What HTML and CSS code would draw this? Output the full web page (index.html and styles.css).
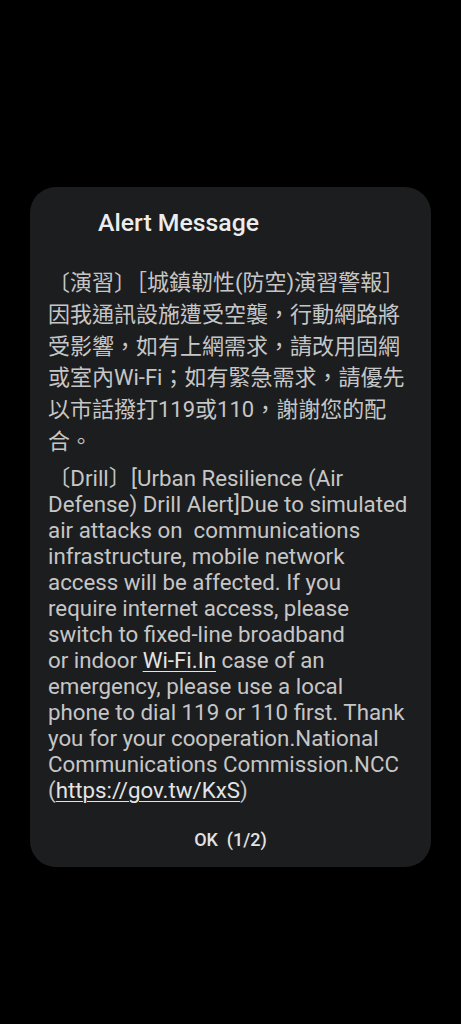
FILE: index.html
```html
<!DOCTYPE html>
<html lang="zh-Hant">
<head>
<meta charset="utf-8">
<title>Alert Message</title>
<link rel="stylesheet" href="styles.css">
</head>
<body>
<div class="screen">
  <div class="dialog">
    <div class="title">Alert Message</div>
    <div class="body">
      <p class="zh">〔演習〕［城鎮韌性(防空)演習警報］<br>因我通訊設施遭受空襲，行動網路將<br>受影響，如有上網需求，請改用固網<br>或室內Wi-Fi；如有緊急需求，請優先<br>以市話撥打119或110，謝謝您的配<br>合。</p>
      <p class="en"><span class="cjk">〔</span>Drill<span class="cjk">〕</span>[Urban Resilience (Air<br>Defense) Drill Alert]Due to simulated<br>air attacks on&nbsp; communications<br>infrastructure, mobile network<br>access will be affected. If you<br>require internet access, please<br>switch to fixed-line broadband<br>or indoor <span class="link">Wi-Fi.In</span> case of an<br>emergency, please use a local<br>phone to dial 119 or 110 first. Thank<br>you for your cooperation.National<br>Communications Commission.NCC<br>(<span class="link">https://gov.tw/KxS</span>)</p>
    </div>
    <div class="actions">
      <span class="ok">OK&nbsp;&nbsp;(1/2)</span>
    </div>
  </div>
</div>
</body>
</html>
```
FILE: styles.css
```css
html, body {
  margin: 0;
  padding: 0;
  background: #000;
}
.screen {
  width: 461px;
  height: 1024px;
  padding-top: 187px;
  box-sizing: border-box;
}
.dialog {
  margin-left: 30px;
  width: 401px;
  height: 680px;
  box-sizing: border-box;
  background: #1c1d1f;
  border-radius: 26px;
  padding: 22px 18px 0 18px;
  display: flex;
  flex-direction: column;
  font-family: Roboto, "Noto Sans CJK TC", sans-serif;
}
.title {
  padding-left: 50px;
  font-size: 24.8px;
  font-weight: 500;
  color: #ececec;
  line-height: 28px;
}
.body {
  margin-top: 30px;
  color: #c6c6c6;
}
.zh {
  margin: 0;
  font-family: Roboto, "Noto Sans CJK TC", sans-serif;
  font-size: 22px;
  line-height: 31.8px;
  white-space: nowrap;
}
.en {
  margin: 5px 0 0 0;
  font-size: 22.3px;
  line-height: 26px;
  white-space: nowrap;
}
.cjk {
  font-family: "Noto Sans CJK TC", sans-serif;
}
.link {
  color: #e4e4e4;
  text-decoration: underline;
  text-underline-offset: 3px;
  text-decoration-thickness: 1px;
}
.actions {
  margin-top: auto;
  height: 39px;
  display: flex;
  align-items: flex-start;
  justify-content: center;
}
.ok {
  font-size: 18px;
  font-weight: 500;
  color: #e2e2e2;
  line-height: 24px;
}
```
